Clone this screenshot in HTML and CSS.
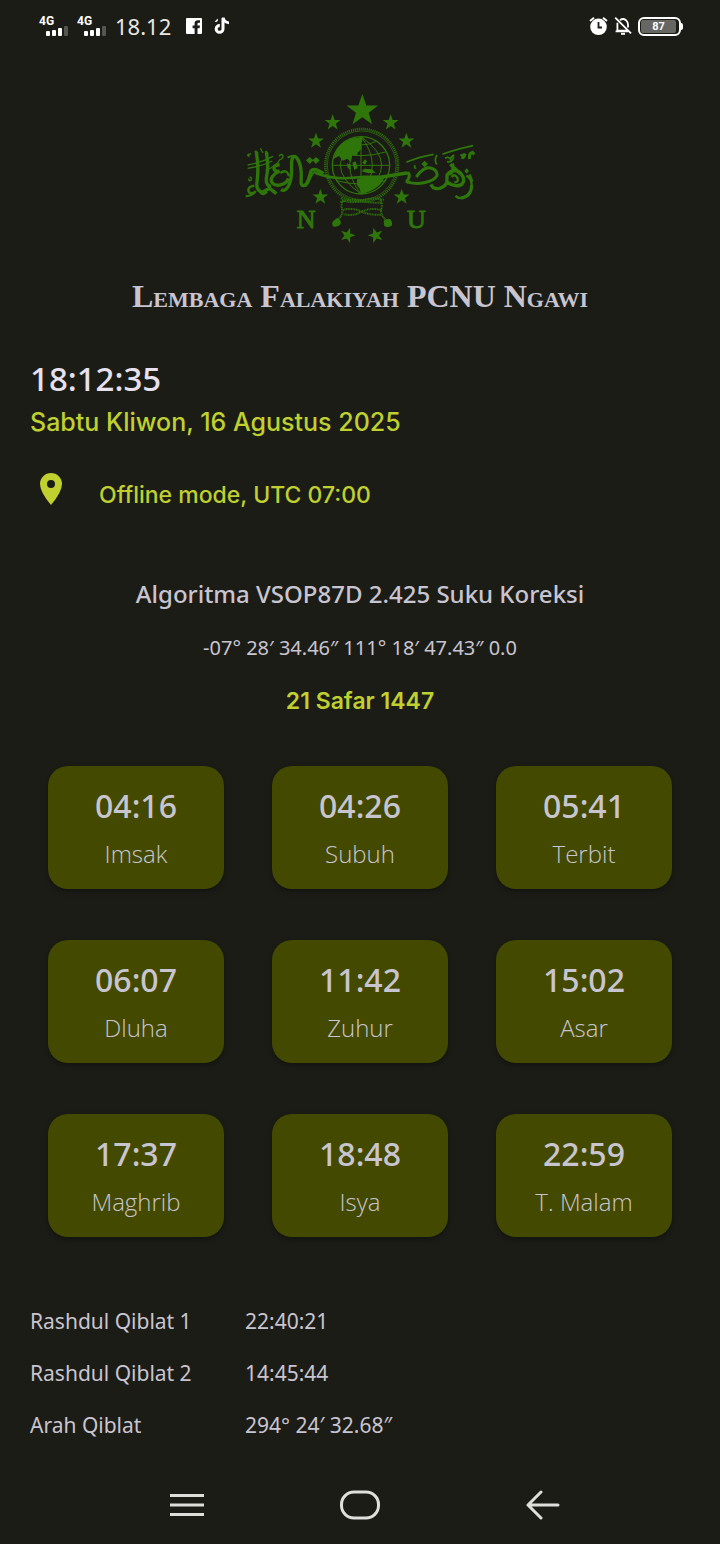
FILE: index.html
```html
<!DOCTYPE html>
<html lang="id">
<head>
<meta charset="utf-8">
<meta name="viewport" content="width=device-width, initial-scale=1">
<title>Lembaga Falakiyah PCNU Ngawi</title>
<link rel="stylesheet" href="styles.css">
</head>
<body>
<svg width="0" height="0" class="defs" aria-hidden="true">
  <defs>
    <path id="star" d="M0 -10 L2.4 -3.1 L9.5 -3.1 L3.8 1.3 L5.9 8.1 L0 4 L-5.9 8.1 L-3.8 1.3 L-9.5 -3.1 L-2.4 -3.1Z"/>
    <g id="bars">
      <rect x="0" y="7" width="4" height="5" rx="1"/>
      <rect x="6" y="6" width="4" height="6" rx="1"/>
      <rect x="12" y="4" width="4" height="8" rx="1"/>
      <rect x="18" y="2" width="4" height="10" rx="1" opacity=".25"/>
    </g>
  </defs>
</svg>

<header class="status">
  <div class="status-group">
    <div class="signal"><span>4G</span><svg width="23" height="12" viewBox="0 0 23 12"><use href="#bars"/></svg></div>
    <div class="signal"><span>4G</span><svg width="23" height="12" viewBox="0 0 23 12"><use href="#bars"/></svg></div>
    <time class="status-clock">18.12</time>
    <svg class="app-icon" width="16" height="16" viewBox="0 0 16 16"><path fill-rule="evenodd" d="M1 0H15Q16 0 16 1V15Q16 16 15 16H11.5V10.2H13.5L14 7.4H11.5V5.8Q11.5 4.8 12.6 4.8H14V2.2H12Q8.6 2.2 8.6 5.4V7.4H6.6V10.2H8.6V16H1Q0 16 0 15V1Q0 0 1 0Z"/></svg>
    <svg class="app-icon" width="16" height="18" viewBox="0 0 16 18"><path d="M9 1V12A3.4 3.4 0 1 1 5.8 8.5" fill="none" stroke="#fff" stroke-width="3"/><path d="M8 .6H10.6Q11 4 15 4.6V7.2Q11 7 9 4.6Z"/><path d="M.4 4.6L2 3.4L3.6 1.6L4 3.6L2.4 5Z"/></svg>
  </div>
  <div class="status-group status-right">
    <svg width="19" height="20" viewBox="0 0 19 20"><circle cx="9.5" cy="10.8" r="8.3"/><path d="M1 5L5 1.8M18 5L14 1.8" stroke="#fff" stroke-width="2"/><path d="M9.5 6V11.5H13" fill="none" stroke="#1c1c17" stroke-width="1.8"/></svg>
    <svg width="18" height="20" viewBox="0 0 18 20" fill="none" stroke="#fff" stroke-width="1.8"><path d="M6 4.2Q9 1.8 12 4.2Q14 6 14 9V11.5M3.4 6.8V14.6H13M1.6 15.4H14M1.2 1.6L17 17.4"/><path d="M7 17.8H11" stroke-width="2"/></svg>
    <div class="battery"><span>87</span></div>
  </div>
</header>

<main>
  <svg class="logo" viewBox="0 0 720 480" role="img" aria-label="Logo NU">
    <g class="ink">
      <use href="#star" transform="translate(367 62) scale(5)"/>
      <use href="#star" transform="translate(278 98) scale(2.5)"/>
      <use href="#star" transform="translate(228 153) scale(2.5)"/>
      <use href="#star" transform="translate(241 321) scale(2.5)"/>
      <use href="#star" transform="translate(323 436) rotate(18) scale(2.4)"/>
      <use href="#star" transform="translate(452 98) scale(2.5)"/>
      <use href="#star" transform="translate(499 153) scale(2.5)"/>
      <use href="#star" transform="translate(485 321) scale(2.5)"/>
      <use href="#star" transform="translate(407 436) rotate(-18) scale(2.4)"/>
    </g>
    <g transform="translate(225 96)" class="line">
      <circle cx="140" cy="130" r="109" stroke-width="8" stroke-dasharray="3 3"/>
      <circle cx="140" cy="130" r="103" stroke-width="2"/>
      <circle cx="138" cy="130" r="86" stroke-width="4"/>
      <path stroke-width="3" d="M138 44V216M52 130H224M64 90Q138 112 212 90M92 58Q138 80 184 58M64 176Q138 196 212 176M138 44Q70 130 138 216M138 44Q206 130 138 216M138 44Q14 130 138 216M138 44Q262 130 138 216"/>
      <path class="ink" stroke="none" d="M56 110Q66 62 116 48L145 46L138 66L140 80L128 92L126 102L112 100L108 120L96 110L84 116L72 102ZM126 172L164 163L208 166Q196 202 140 216L134 200L126 190ZM112 122L122 118L128 138L118 144ZM142 122L150 128L156 118L150 112ZM148 140L170 142L182 152L160 154L140 148ZM96 124L106 128L108 144L98 138Z"/>
      <path stroke-width="8" d="M0 152Q50 172 100 168T200 164L276 152"/>
      <g stroke-width="6" stroke-dasharray="3 2">
        <path d="M78 228Q100 248 138 236T206 234M76 240Q110 228 140 236T202 242M84 236Q76 252 82 264Q112 256 138 268T198 278M196 234Q204 250 198 264Q164 256 138 270T86 276M82 266Q82 284 68 292M198 268Q200 284 216 296"/>
      </g>
      <path class="ink" stroke="none" d="M66 288Q80 294 77 306Q70 316 56 314Q48 308 54 298ZM206 296Q216 288 226 292Q234 302 230 311Q218 318 208 312Z"/>
    </g>
    <g transform="translate(-15 -15)" class="line">
      <path stroke-width="10" d="M265 266Q238 246 228 258C222 276 220 300 206 302C192 302 202 278 198 254C194 226 180 204 172 220C166 236 174 262 166 288C162 306 150 322 138 314"/>
      <path stroke-width="6" d="M204 300Q212 310 222 288Q232 264 240 260M158 218Q184 204 190 226"/>
      <path stroke-width="10" d="M134 240C108 238 114 264 134 258C116 266 102 282 112 294C124 308 156 298 160 280M64 200Q72 250 66 290Q62 316 82 322L104 310L124 326M94 202Q102 244 94 280Q92 302 108 304"/>
      <path stroke-width="7" d="M60 198L68 206M92 198L98 208M58 302Q34 306 42 322Q56 328 62 318Q54 332 32 334M76 322Q86 334 96 320M136 264Q156 250 162 274"/>
      <path stroke-width="4" d="M38 240Q76 234 114 214M38 250Q80 244 112 228M92 256Q124 244 136 222M132 214Q138 204 144 212Q144 222 134 224M36 212L48 206M42 216L40 206M76 190L84 204M44 276Q52 278 48 286Q40 290 42 280"/>
      <path class="ink" stroke="none" d="M224 216L235 226L224 237L213 226ZM243 216L254 226L243 237L232 226Z"/>
    </g>
    <g transform="translate(345 -15)" class="line">
      <path stroke-width="9" d="M84 276L160 264Q166 270 160 282Q150 292 162 292C190 300 234 292 246 272C248 252 222 242 204 254Q192 262 184 276"/>
      <path stroke-width="10" d="M228 298Q234 314 254 310Q278 302 276 282C272 262 300 246 318 266C334 286 324 304 302 302Q288 300 278 292M286 238L316 266M292 236Q300 256 284 268"/>
      <path stroke-width="7" d="M290 276Q300 264 308 280Q312 292 298 292M334 272Q350 280 350 300Q350 330 322 338Q308 342 302 332M344 268L352 290"/>
      <path stroke-width="9" d="M350 300Q350 334 318 340"/>
      <path stroke-width="5" d="M154 232Q190 216 236 208M262 208Q300 194 354 182M180 240Q176 250 184 250M246 210Q236 228 246 238M270 220Q280 214 286 222Q290 212 298 210M276 230Q292 234 296 214"/>
      <path stroke-width="9" d="M318 208Q324 218 330 206Q326 222 320 216M344 222Q340 206 352 202L358 208"/>
      <path class="ink" stroke="none" d="M209 227L219 237L209 247L199 237ZM335 250L342 258L335 266L328 258Z"/>
    </g>
    <g class="logo-letters"><text x="170" y="414">N</text><text x="501" y="413">U</text></g>
  </svg>

  <h1>Lembaga Falakiyah PCNU Ngawi</h1>

  <section class="now">
    <time class="clock">18:12:35</time>
    <p class="date">Sabtu Kliwon, 16 Agustus 2025</p>
    <div class="place">
      <svg width="22" height="32" viewBox="0 0 22 32"><path fill-rule="evenodd" d="M11 0A11 11 0 0 1 22 11Q22 19 11 32Q0 19 0 11A11 11 0 0 1 11 0ZM11 7A4 4 0 1 0 11 15A4 4 0 1 0 11 7Z"/></svg>
      <p>Offline mode, UTC 07:00</p>
    </div>
  </section>

  <section class="info">
    <h2>Algoritma VSOP87D 2.425 Suku Koreksi</h2>
    <p class="coords">-07° 28′ 34.46″ 111° 18′ 47.43″ 0.0</p>
    <p class="hijri">21 Safar 1447</p>
  </section>

  <section class="times">
    <article><time>04:16</time><span>Imsak</span></article>
    <article><time>04:26</time><span>Subuh</span></article>
    <article><time>05:41</time><span>Terbit</span></article>
    <article><time>06:07</time><span>Dluha</span></article>
    <article><time>11:42</time><span>Zuhur</span></article>
    <article><time>15:02</time><span>Asar</span></article>
    <article><time>17:37</time><span>Maghrib</span></article>
    <article><time>18:48</time><span>Isya</span></article>
    <article><time>22:59</time><span>T. Malam</span></article>
  </section>

  <table class="qibla">
    <tbody>
      <tr><th scope="row">Rashdul Qiblat 1</th><td>22:40:21</td></tr>
      <tr><th scope="row">Rashdul Qiblat 2</th><td>14:45:44</td></tr>
      <tr><th scope="row">Arah Qiblat</th><td>294° 24′ 32.68″</td></tr>
    </tbody>
  </table>
</main>

<nav class="navbar">
  <button type="button" aria-label="Menu"><svg width="34" height="24" viewBox="0 0 34 24"><path d="M0 2.5H34M0 12H34M0 21.5H34"/></svg></button>
  <button type="button" aria-label="Beranda"><svg width="40" height="30" viewBox="0 0 40 30"><rect x="1.5" y="2" width="37" height="26" rx="12.5"/></svg></button>
  <button type="button" aria-label="Kembali"><svg width="34" height="30" viewBox="0 0 34 30"><path stroke-linecap="round" stroke-linejoin="round" d="M32 15H2M15 2L2 15L15 28"/></svg></button>
</nav>
</body>
</html>
```

FILE: styles.css
```css
* {
  box-sizing: border-box;
}

body {
  margin: 0;
  background: #1c1c17;
  color: #c9c5d0;
  font-family: "Noto Sans", "Open Sans", sans-serif;
}

h1, h2, p {
  margin: 0;
}

.defs {
  position: absolute;
}

.status {
  display: flex;
  justify-content: space-between;
  align-items: center;
  height: 52px;
  padding: 0 37px 0 39px;
  color: #fff;
  fill: #fff;
}

.status-group {
  display: flex;
  align-items: center;
}

.signal {
  display: flex;
  flex-direction: column;
  width: 38px;
  height: 20px;
}

.signal span {
  font: bold 12px/10px Roboto, sans-serif;
}

.signal svg {
  margin-left: 7px;
  margin-top: -2px;
}

.status-clock {
  font: 22px/28px "Noto Sans", sans-serif;
  color: #e8e8e4;
  width: 71px;
}

.app-icon {
  margin-right: 12px;
}

.status-right {
  gap: 6px;
}

.battery {
  position: relative;
  width: 43px;
  height: 19px;
  margin-right: 2px;
  padding: 1px;
  border: 2px solid #fff;
  border-radius: 6px;
}

.battery span {
  display: block;
  width: 35px;
  height: 13px;
  border-radius: 2px;
  background: #666662;
  font: bold 11px/13px Roboto, sans-serif;
  text-align: center;
}

.battery::after {
  content: "";
  position: absolute;
  right: -4px;
  top: 4px;
  width: 2px;
  height: 7px;
  border-radius: 0 2px 2px 0;
  background: #fff;
}

main {
  padding: 38px 30px 0;
}

.logo {
  display: block;
  width: 240px;
  height: 160px;
  margin: 0 auto;
}

.ink {
  fill: #2f760a;
}

.line {
  fill: none;
  stroke: #2f760a;
}

.logo-letters {
  fill: #2f760a;
  stroke: #2f760a;
  stroke-width: 3px;
  font: 78px "Liberation Serif", serif;
}

h1 {
  margin-top: 30px;
  font: bold 32px/32px "Liberation Serif", serif;
  font-variant: small-caps;
  text-align: center;
}

.now {
  margin-top: 45px;
}

.clock {
  display: block;
  font-size: 33px;
  line-height: 44px;
  font-weight: 500;
  color: #e6e1ec;
}

.date,
.place,
.hijri {
  color: #bfd02f;
  font-family: Inter, sans-serif;
  font-weight: 500;
}

.date {
  margin-top: 3px;
  font-size: 25px;
  line-height: 36px;
}

.place {
  display: flex;
  align-items: flex-start;
  gap: 37px;
  margin-top: 33px;
  padding-left: 10px;
  fill: #bfd02f;
}

.place p {
  margin-top: 6px;
  font-size: 23px;
  line-height: 32px;
}

.info {
  margin-top: 65px;
  text-align: center;
}

h2 {
  font-size: 24px;
  line-height: 36px;
  font-weight: 500;
}

.coords {
  margin-top: 20px;
  font-size: 20px;
  line-height: 32px;
}

.hijri {
  margin-top: 21px;
  font-size: 23px;
  line-height: 32px;
  font-weight: 600;
}

.times {
  display: grid;
  grid-template-columns: repeat(3, 1fr);
  gap: 51px 48px;
  margin-top: 49px;
  padding: 0 18px;
}

.times article {
  display: flex;
  flex-direction: column;
  align-items: center;
  padding: 18px 0 17px;
  border-radius: 20px;
  background: #434a00;
  box-shadow: 0 2px 5px #0006;
}

.times time {
  font-size: 32px;
  line-height: 44px;
  font-weight: 500;
}

.times span {
  margin-top: 8px;
  font: 300 24px/36px "Open Sans", sans-serif;
}

.qibla {
  width: 100%;
  margin-top: 58px;
  border-collapse: collapse;
  font-size: 21px;
  line-height: 52px;
  text-align: left;
}

.qibla th,
.qibla td {
  padding: 0;
  font-weight: 400;
}

.qibla th {
  width: 215px;
}

.navbar {
  display: grid;
  grid-template-columns: 172fr 174fr 192fr;
  align-items: center;
  justify-items: center;
  height: 72px;
  margin-top: 18px;
  padding: 0 81px 0 101px;
}

.navbar button {
  display: flex;
  padding: 0;
  border: 0;
  background: none;
}

.navbar svg {
  fill: none;
  stroke: #dededa;
  stroke-width: 3;
}
```
